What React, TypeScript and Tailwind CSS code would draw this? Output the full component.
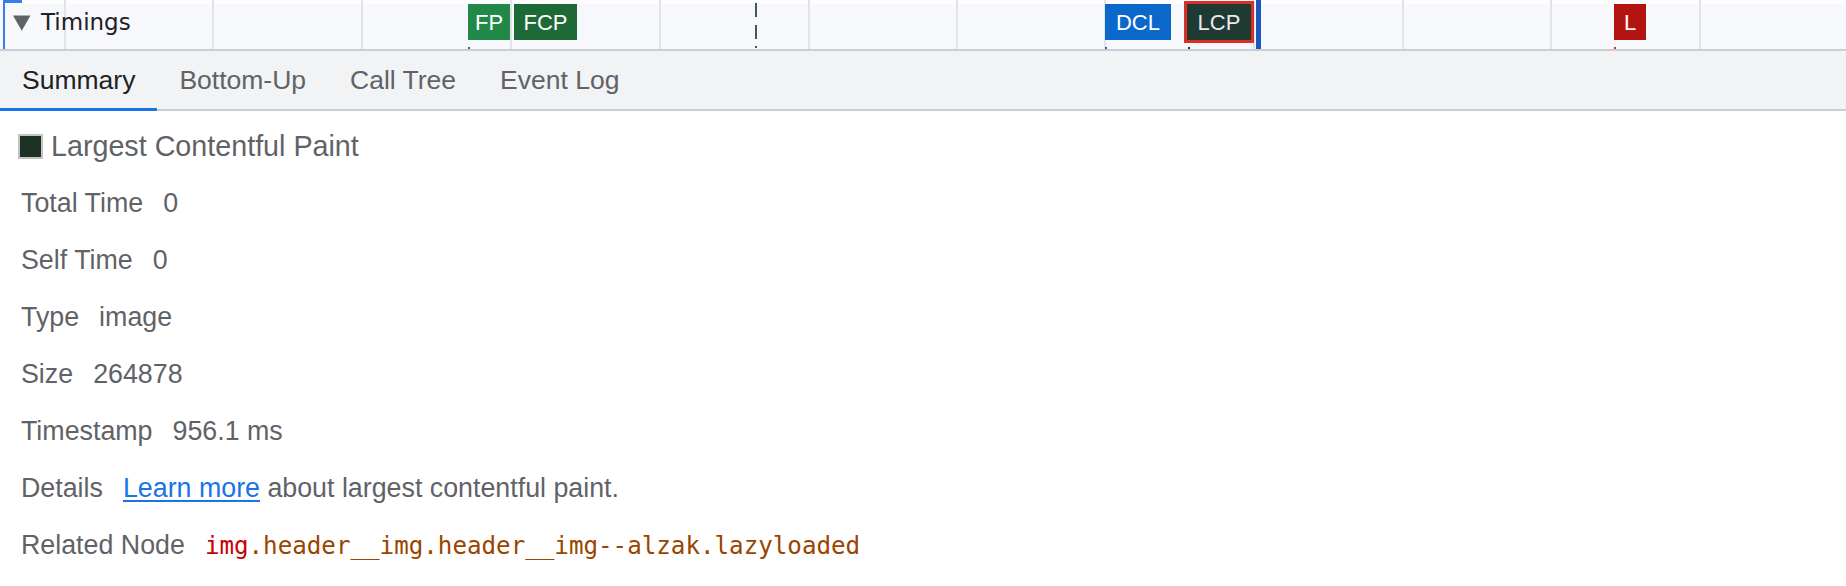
import React from "react"

const gridLines = [64, 212, 361, 510, 659, 808, 956, 1104, 1253, 1402, 1550, 1699]

type Marker = { label: string; left: number; width: number; bg: string }

const markers: Marker[] = [
  { label: "FP", left: 468, width: 42, bg: "#228847" },
  { label: "FCP", left: 514, width: 63, bg: "#1d6a36" },
  { label: "DCL", left: 1105, width: 66, bg: "#0b68cb" },
  { label: "L", left: 1614, width: 32, bg: "#b31412" },
]

const tabs = ["Summary", "Bottom-Up", "Call Tree", "Event Log"]

const details: { label: string; value: React.ReactNode }[] = [
  { label: "Total Time", value: "0" },
  { label: "Self Time", value: "0" },
  { label: "Type", value: "image" },
  { label: "Size", value: "264878" },
  { label: "Timestamp", value: "956.1 ms" },
  {
    label: "Details",
    value: (
      <>
        <span className="text-[#1a73e8] underline decoration-2 underline-offset-[3px]">Learn more</span> about largest
        contentful paint.
      </>
    ),
  },
  {
    label: "Related Node",
    value: (
      <span className="font-['DejaVu_Sans_Mono',monospace] text-[24.2px]">
        <span className="text-[#c80000]">img</span>
        <span className="text-[#994500]">.header__img.header__img--alzak.lazyloaded</span>
      </span>
    ),
  },
]

function TimingsTrack() {
  return (
    <div className="relative h-[49px] bg-[#f7f8fc] shadow-[inset_0_4px_0_#fdfdff]">
      {/* grid */}
      {gridLines.map((x) => (
        <div key={x} className="absolute top-0 h-[49px] w-[2px] bg-[#e1e3e7]" style={{ left: x }} />
      ))}

      {/* selection bracket */}
      <div className="absolute left-[3px] top-0 h-[49px] w-[2px] bg-[#3b7de8]" />
      <div className="absolute left-[3px] top-0 h-[3px] w-[19px] bg-[#3b7de8]" />

      {/* label */}
      <div className="relative flex h-[45px] items-center pl-[13px]">
        <svg width="18" height="16" viewBox="0 0 18 16" className="mr-[10px]">
          <path d="M0 0.5 H17.5 L8.75 15.8 Z" fill="#5f6368" />
        </svg>
        <span className="font-['DejaVu_Sans',sans-serif] text-[23px] text-[#202124]">Timings</span>
      </div>

      {/* dashed nav start line and ticks */}
      <svg className="absolute left-0 top-0" width="1846" height="49">
        <path d="M756 3 V17 M756 25 V39 M756 46 V48" stroke="#3f5d4c" strokeWidth="2" />
        <rect x="468" y="47" width="2" height="2" fill="#228847" />
        <rect x="1105" y="47" width="2" height="2" fill="#0b68cb" />
        <rect x="1188" y="47" width="2" height="2" fill="#1f3a33" />
        <rect x="1614" y="47" width="2" height="2" fill="#d93025" />
      </svg>

      {/* markers */}
      {markers.map((m) => (
        <div
          key={m.label}
          className="absolute top-[4px] flex h-[36px] items-center justify-center text-[22px] text-white"
          style={{ left: m.left, width: m.width, backgroundColor: m.bg }}
        >
          {m.label}
        </div>
      ))}

      {/* selected LCP */}
      <div className="absolute left-[1184px] top-[1px] flex h-[42px] w-[70px] items-center justify-center border-[3px] border-[#d93025] bg-[#1f3a33] text-[22px] text-[#e8eaed]">
        LCP
      </div>

      {/* cursor */}
      <div className="absolute left-[1256px] top-0 h-[49px] w-[5px] bg-[#1b57bd]" />
    </div>
  )
}

export default function App() {
  return (
    <div className="h-[586px] w-[1846px] overflow-hidden bg-white font-['Liberation_Sans',Arial,sans-serif]">
      <TimingsTrack />
      <div className="h-[2px] bg-[#cbcdd1]" />

      {/* Tabs */}
      <div className="flex h-[60px] border-b-2 border-[#cacdd1] bg-[#f1f3f4]">
        {tabs.map((tab, i) => (
          <div
            key={tab}
            className={`relative flex items-center px-[22px] pt-[2px] text-[26.5px] ${
              i === 0 ? "text-[#202124]" : "text-[#5f6368]"
            }`}
          >
            {tab}
            {i === 0 && <span className="absolute -bottom-[2px] left-0 right-0 h-[3px] bg-[#1a73e8]" />}
          </div>
        ))}
      </div>

      {/* Summary */}
      <div className="pt-[7px] text-[#5f6368]">
        <div className="flex h-[57px] items-center pl-[18px]">
          <div className="mr-[8px] h-[25px] w-[25px] border-2 border-[#c4c4c4] bg-[#1c3323]" />
          <span className="text-[28.7px]">Largest Contentful Paint</span>
        </div>
        {details.map((row) => (
          <div key={row.label} className="flex h-[57px] items-baseline pl-[21px] text-[26.8px] leading-[57px]">
            <span className="mr-[20px]">{row.label}</span>
            <span>{row.value}</span>
          </div>
        ))}
      </div>
    </div>
  )
}
